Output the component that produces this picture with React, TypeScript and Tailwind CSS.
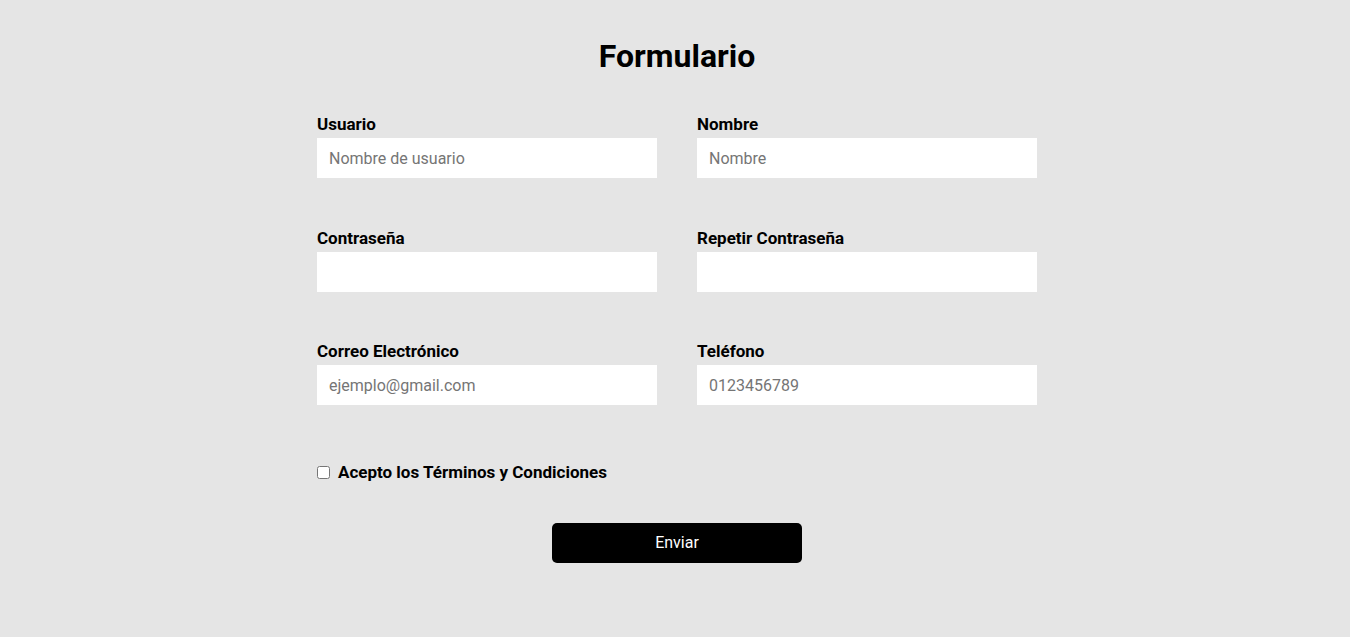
import React from 'react';

const fields = [
  { label: 'Usuario', type: 'text', placeholder: 'Nombre de usuario' },
  { label: 'Nombre', type: 'text', placeholder: 'Nombre' },
  { label: 'Contraseña', type: 'password', placeholder: '' },
  { label: 'Repetir Contraseña', type: 'password', placeholder: '' },
  { label: 'Correo Electrónico', type: 'email', placeholder: 'ejemplo@gmail.com' },
  { label: 'Teléfono', type: 'tel', placeholder: '0123456789' },
];

const App: React.FC = () => {
  return (
    <div className="min-h-screen bg-[#e5e5e5] font-['Roboto',sans-serif] text-black pt-[37px] pl-[4px]">
      <h1 className="text-[32px] leading-[38px] font-bold text-center">Formulario</h1>

      <form className="w-[720px] mx-auto mt-[40px]" onSubmit={(e) => e.preventDefault()}>
        <div className="grid grid-cols-2 gap-x-[40px] gap-y-[50.5px]">
          {fields.map((f) => (
            <div key={f.label} className="flex flex-col">
              <label className="text-[17px] leading-[18px] font-bold mb-[5px]">{f.label}</label>
              <input
                type={f.type}
                placeholder={f.placeholder}
                className="h-[40px] bg-white px-[12px] text-base outline-none placeholder:text-[#757575]"
              />
            </div>
          ))}
        </div>

        <label className="flex items-center gap-[8px] mt-[57px] text-[17px] leading-[20px] font-bold">
          <input type="checkbox" className="w-[13px] h-[13px]" />
          Acepto los Términos y Condiciones
        </label>

        <div className="flex justify-center mt-[41px]">
          <button
            type="submit"
            className="w-[250px] h-[40px] bg-black text-white text-base rounded-[5px]"
          >
            Enviar
          </button>
        </div>
      </form>
    </div>
  );
};

export default App;
